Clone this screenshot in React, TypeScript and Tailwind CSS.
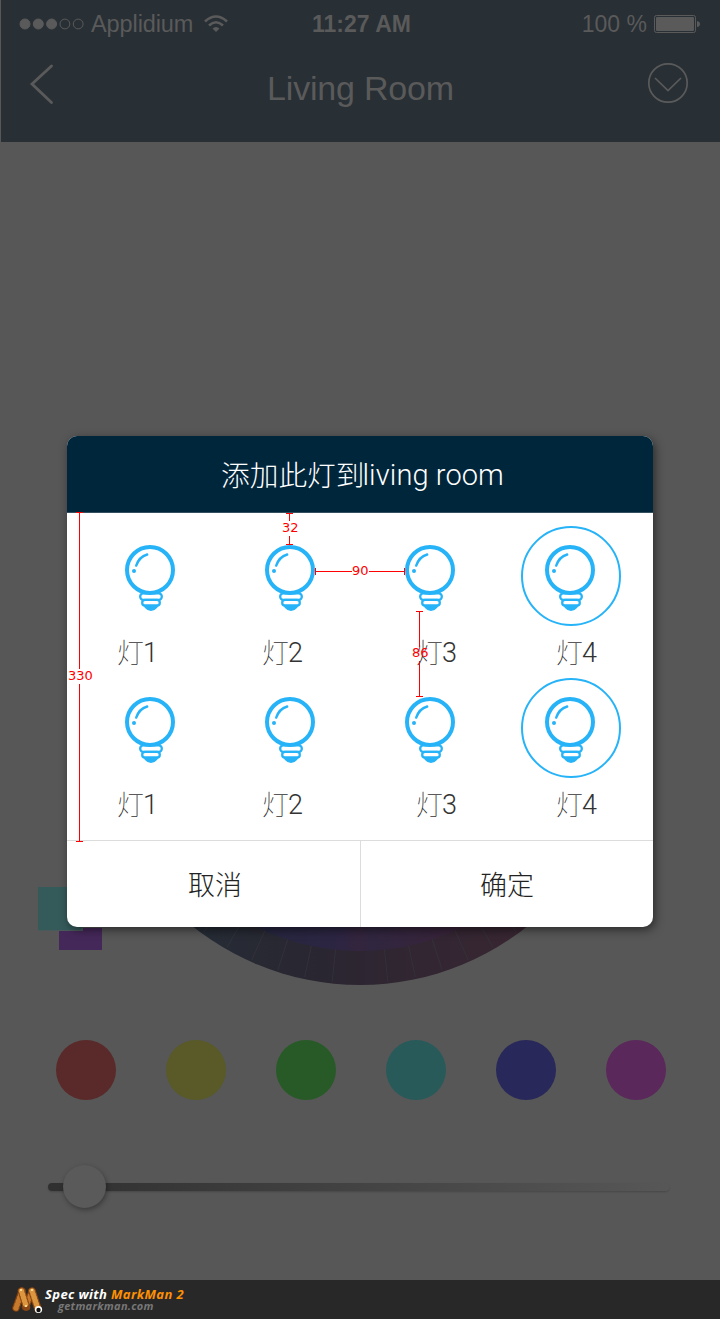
import React from "react";

const swatches = [
  "bg-[#5a2a2a]",
  "bg-[#595a27]",
  "bg-[#285a28]",
  "bg-[#285a5a]",
  "bg-[#28285a]",
  "bg-[#5a285a]",
];

const spokes = [-36, -30, -24, -18, -12, -6, 6, 12, 18, 24, 30, 36];

function Bulb() {
  return (
    <svg width="50" height="67" viewBox="0 0 50 67" fill="none" stroke="#27b3f7">
      <circle cx="25" cy="25" r="23" strokeWidth="4" />
      <path d="M11.2 20.6C13 15 17.200 11 22.200 9.500" strokeWidth="2.400" strokeLinecap="round" />
      <circle cx="9" cy="26" r="2" fill="#27b3f7" stroke="none" />
      <rect x="15.200" y="48.400" width="21.600" height="6.400" rx="3" strokeWidth="2.300" />
      <rect x="17.200" y="54.900" width="17.600" height="5.600" rx="2.800" strokeWidth="2.300" />
      <path d="M18 60H34L32 63Q29.500 66 26 66T20 63Z" fill="#27b3f7" stroke="none" />
    </svg>
  );
}

function Lamp({ n, pad }: { n: number; pad: string }) {
  return (
    <div className="relative flex h-[152px] w-[140px] flex-col">
      <div className="flex h-[82px] items-start justify-center">
        <Bulb />
      </div>
      {n === 4 && (
        <div className="absolute -top-[19px] left-[21px] size-[100px] rounded-full border-2 border-[#27b3f7]" />
      )}
      <div className={`flex h-[50px] items-center leading-none text-[#333] ${pad}`}>
        <span className="pb-px font-['Noto_Sans_CJK_SC',sans-serif] text-[27px] font-thin">灯</span>
        <span className="-ml-px pt-[2px] font-['Roboto',sans-serif] text-[27px] font-light">{n}</span>
      </div>
    </div>
  );
}

function LampRow() {
  return (
    <div className="flex h-[152px] pl-[13px]">
      <Lamp n={1} pad="pl-[37px]" />
      <Lamp n={2} pad="pl-[42px]" />
      <Lamp n={3} pad="pl-[56px]" />
      <Lamp n={4} pad="pl-[56px]" />
    </div>
  );
}

function Header() {
  return (
    <header className="ml-px h-[142px] bg-[#282f35] font-['Liberation_Sans',sans-serif] text-[#5a5a5a]">
      <div className="grid h-[48px] grid-cols-3 items-center pr-[19px] pl-[18px]">
        <div className="flex items-center">
          <svg width="66" height="12" viewBox="0 0 66 12" fill="#5a5a5a" stroke="#5a5a5a">
            <circle cx="6" cy="6" r="5" />
            <circle cx="19.300" cy="6" r="5" />
            <circle cx="32.600" cy="6" r="5" />
            <circle cx="45.900" cy="6" r="4.900" fill="none" />
            <circle cx="59.200" cy="6" r="4.900" fill="none" />
          </svg>
          <span className="ml-[6px] pt-px text-[23.500px] tracking-[-0.1px]">Applidium</span>
          <svg className="ml-[11px] shrink-0" width="24" height="18" viewBox="0 0 24 18" fill="none" stroke="#5a5a5a" strokeWidth="2.600">
            <path d="M1 6.500Q12-3.500 23 6.500" />
            <path d="M5 10.500Q12 4 19 10.500" />
            <path d="M8.500 13.500Q12 10.500 15.500 13.500L12 17Z" fill="#5a5a5a" stroke="none" />
          </svg>
        </div>
        <div className="pl-[3px] text-center text-[23px] font-bold">11:27 AM</div>
        <div className="flex items-center justify-end">
          <span className="text-[23px] whitespace-nowrap">100 %</span>
          <svg className="ml-[7px] shrink-0" width="47" height="18" viewBox="0 0 47 18" fill="#5a5a5a">
            <rect x="0.500" y="0.500" width="41" height="17" rx="2" fill="none" stroke="#5a5a5a" />
            <rect x="2" y="2" width="38" height="14" rx="1" />
            <path d="M43 6Q46 6.500 46 9T43 12Z" />
          </svg>
        </div>
      </div>
      <div className="flex h-[80px] items-center justify-between pr-[31px] pl-[28px]">
        <svg className="mb-[8px]" width="26" height="42" viewBox="0 0 26 42" fill="none" stroke="#5a5a5a" strokeWidth="2.800">
          <path d="M22.500 3L3 21L22.500 39.500" strokeLinecap="round" />
        </svg>
        <h1 className="pl-[19px] text-[34px] leading-none tracking-[-0.2px]">Living Room</h1>
        <svg className="mb-[10px]" width="42" height="42" viewBox="0 0 42 42" fill="none" stroke="#5a5a5a" strokeWidth="1.700">
          <circle cx="21" cy="21" r="19.200" />
          <path d="M8 16L21 28.500L34 16" />
        </svg>
      </div>
    </header>
  );
}

function ColorWheel() {
  return (
    <svg className="mx-auto block" width="540" height="540" viewBox="0 0 540 540">
      <defs>
        <linearGradient id="rim" x1="0.150" x2="0.850">
          <stop offset="0" stopColor="#242d36" />
          <stop offset="0.400" stopColor="#2a2631" />
          <stop offset="0.600" stopColor="#302632" />
          <stop offset="1" stopColor="#3a2632" />
        </linearGradient>
        <linearGradient id="disc" x1="0.250" x2="0.750">
          <stop offset="0" stopColor="#23263f" />
          <stop offset="0.420" stopColor="#2d2542" />
          <stop offset="0.490" stopColor="#33253d" />
          <stop offset="0.550" stopColor="#30263f" />
          <stop offset="1" stopColor="#3b2338" />
        </linearGradient>
      </defs>
      <circle cx="270" cy="270" r="268" fill="url(#rim)" />
      {spokes.map((a) => (
        <path key={a} d="M270 500V536" stroke="#32313a" strokeWidth="1" transform={`rotate(${a} 270 270)`} />
      ))}
      <circle cx="270" cy="270" r="234" fill="url(#disc)" />
    </svg>
  );
}

function Dialog() {
  return (
    <section className="absolute top-[436px] left-[67px] flex h-[491px] w-[586px] flex-col overflow-hidden rounded-[10px] bg-white shadow-[2px_3px_10px_rgba(0,0,0,0.5)]">
      <div className="flex h-[77px] items-center justify-center border-b border-[#34505f] bg-[#00263b] pl-[5px] leading-none text-white">
        <span className="font-['Noto_Sans_CJK_SC',sans-serif] text-[28.700px] font-extralight">添加此灯到</span>
        <span className="-ml-[2px] pt-[3px] font-['Roboto',sans-serif] text-[29px] font-light tracking-[0.1px]">living room</span>
      </div>
      <div className="h-[327px] pt-[32px]">
        <LampRow />
        <LampRow />
      </div>
      <div className="flex h-[87px] border-t border-[#dcdcdc] font-['Noto_Sans_CJK_SC',sans-serif] text-[27px] font-light text-[#222]">
        <button className="w-[294px] border-r border-[#dcdcdc] pt-px pl-[3px]">取消</button>
        <button className="flex-1 pt-px">确定</button>
      </div>
    </section>
  );
}

function Measures() {
  return (
    <div className="absolute inset-0 font-['DejaVu_Sans',sans-serif] text-[13px] leading-none text-[#f00]">
      <svg className="absolute inset-0" width="720" height="900" viewBox="0 0 720 900" stroke="#f00" shapeRendering="crispEdges">
        <path d="M76 512.500H83M79.500 512V669M79.500 684V841M76 841.500H83" />
        <path d="M286 513.500H293M289.500 513V521M289.500 536V544M286 544.500H293" />
        <path d="M315.500 568V575M315 571.500H352M369 571.500H405M404.500 568V575" />
        <path d="M416 611.500H423M419.500 611V647M419.500 661V696M416 696.500H423" />
      </svg>
      <span className="absolute top-[669px] left-[68px]">330</span>
      <span className="absolute top-[521px] left-[282px]">32</span>
      <span className="absolute top-[564px] left-[352px]">90</span>
      <span className="absolute top-[646px] left-[412px]">86</span>
    </div>
  );
}

function Footer() {
  return (
    <footer className="flex h-[39px] bg-[#282828] pl-[12px] font-['Open_Sans',sans-serif] font-bold italic">
      <svg className="mt-[6px]" width="32" height="30" viewBox="0 0 32 30" fill="none" strokeLinecap="round">
        <path d="M4 22L10 5M20 6L13.500 21" stroke="#7d3f10" strokeWidth="7.500" />
        <path d="M4 22L10 5M20 6L13.500 21" stroke="#c77a2b" strokeWidth="5.500" strokeDasharray="0.1 3.5" />
        <path d="M9.500 5L14.500 21M20 5L26 23" stroke="#8a4715" strokeWidth="7.500" />
        <path d="M9.500 5L14.500 21M20 5L26 23" stroke="#dc9640" strokeWidth="5.500" strokeDasharray="0.1 3.300" />
        <g fill="#fff0b0">
          <circle cx="9" cy="4" r="1" />
          <circle cx="20" cy="4" r="1" />
          <circle cx="14" cy="20" r="1" />
        </g>
        <circle cx="26.500" cy="23.500" r="3.600" fill="#fff" />
        <circle cx="26.500" cy="24" r="2.200" fill="#111" />
      </svg>
      <div className="pt-[6px] pl-px whitespace-nowrap">
        <div className="text-[13px] leading-[16px] tracking-[0.38px] text-white">
          Spec with <span className="text-[#ff9000]">MarkMan 2</span>
        </div>
        <div className="-mt-[2px] pl-[13px] text-[11px] leading-[12px] tracking-[0.27px] text-[#777]">getmarkman.com</div>
      </div>
    </footer>
  );
}

export default function App() {
  return (
    <main className="relative flex h-[1319px] w-[720px] flex-col overflow-hidden bg-[#575757]">
      <Header />
      <div className="relative h-[845px] shrink-0 pt-[305px]">
        <ColorWheel />
        <div className="absolute top-[786px] left-[59px] h-[22px] w-[43px] bg-[#45285a]" />
        <div className="absolute top-[745px] left-[38px] h-[44px] w-[45px] border-r border-b border-[#4a5a5a] bg-[#355a5a]" />
      </div>
      <div className="mt-[53px] flex justify-between pr-[54px] pl-[56px]">
        {swatches.map((c) => (
          <div key={c} className={`size-[60px] rounded-full ${c}`} />
        ))}
      </div>
      <div className="mt-[65px] ml-[48px] flex h-[44px] w-[621px] items-center">
        <div className="flex h-[8px] w-full items-center rounded-full bg-linear-to-r from-[#303030] to-[#575757] shadow-[0px_1px_2px_rgba(0,0,0,0.18)]">
          <div className="mb-[2px] ml-[15px] size-[43px] rounded-full bg-[#5a5a5a] shadow-[1px_2px_5px_rgba(0,0,0,0.35)]" />
        </div>
      </div>
      <div className="flex-1" />
      <Footer />
      <Dialog />
      <Measures />
    </main>
  );
}
